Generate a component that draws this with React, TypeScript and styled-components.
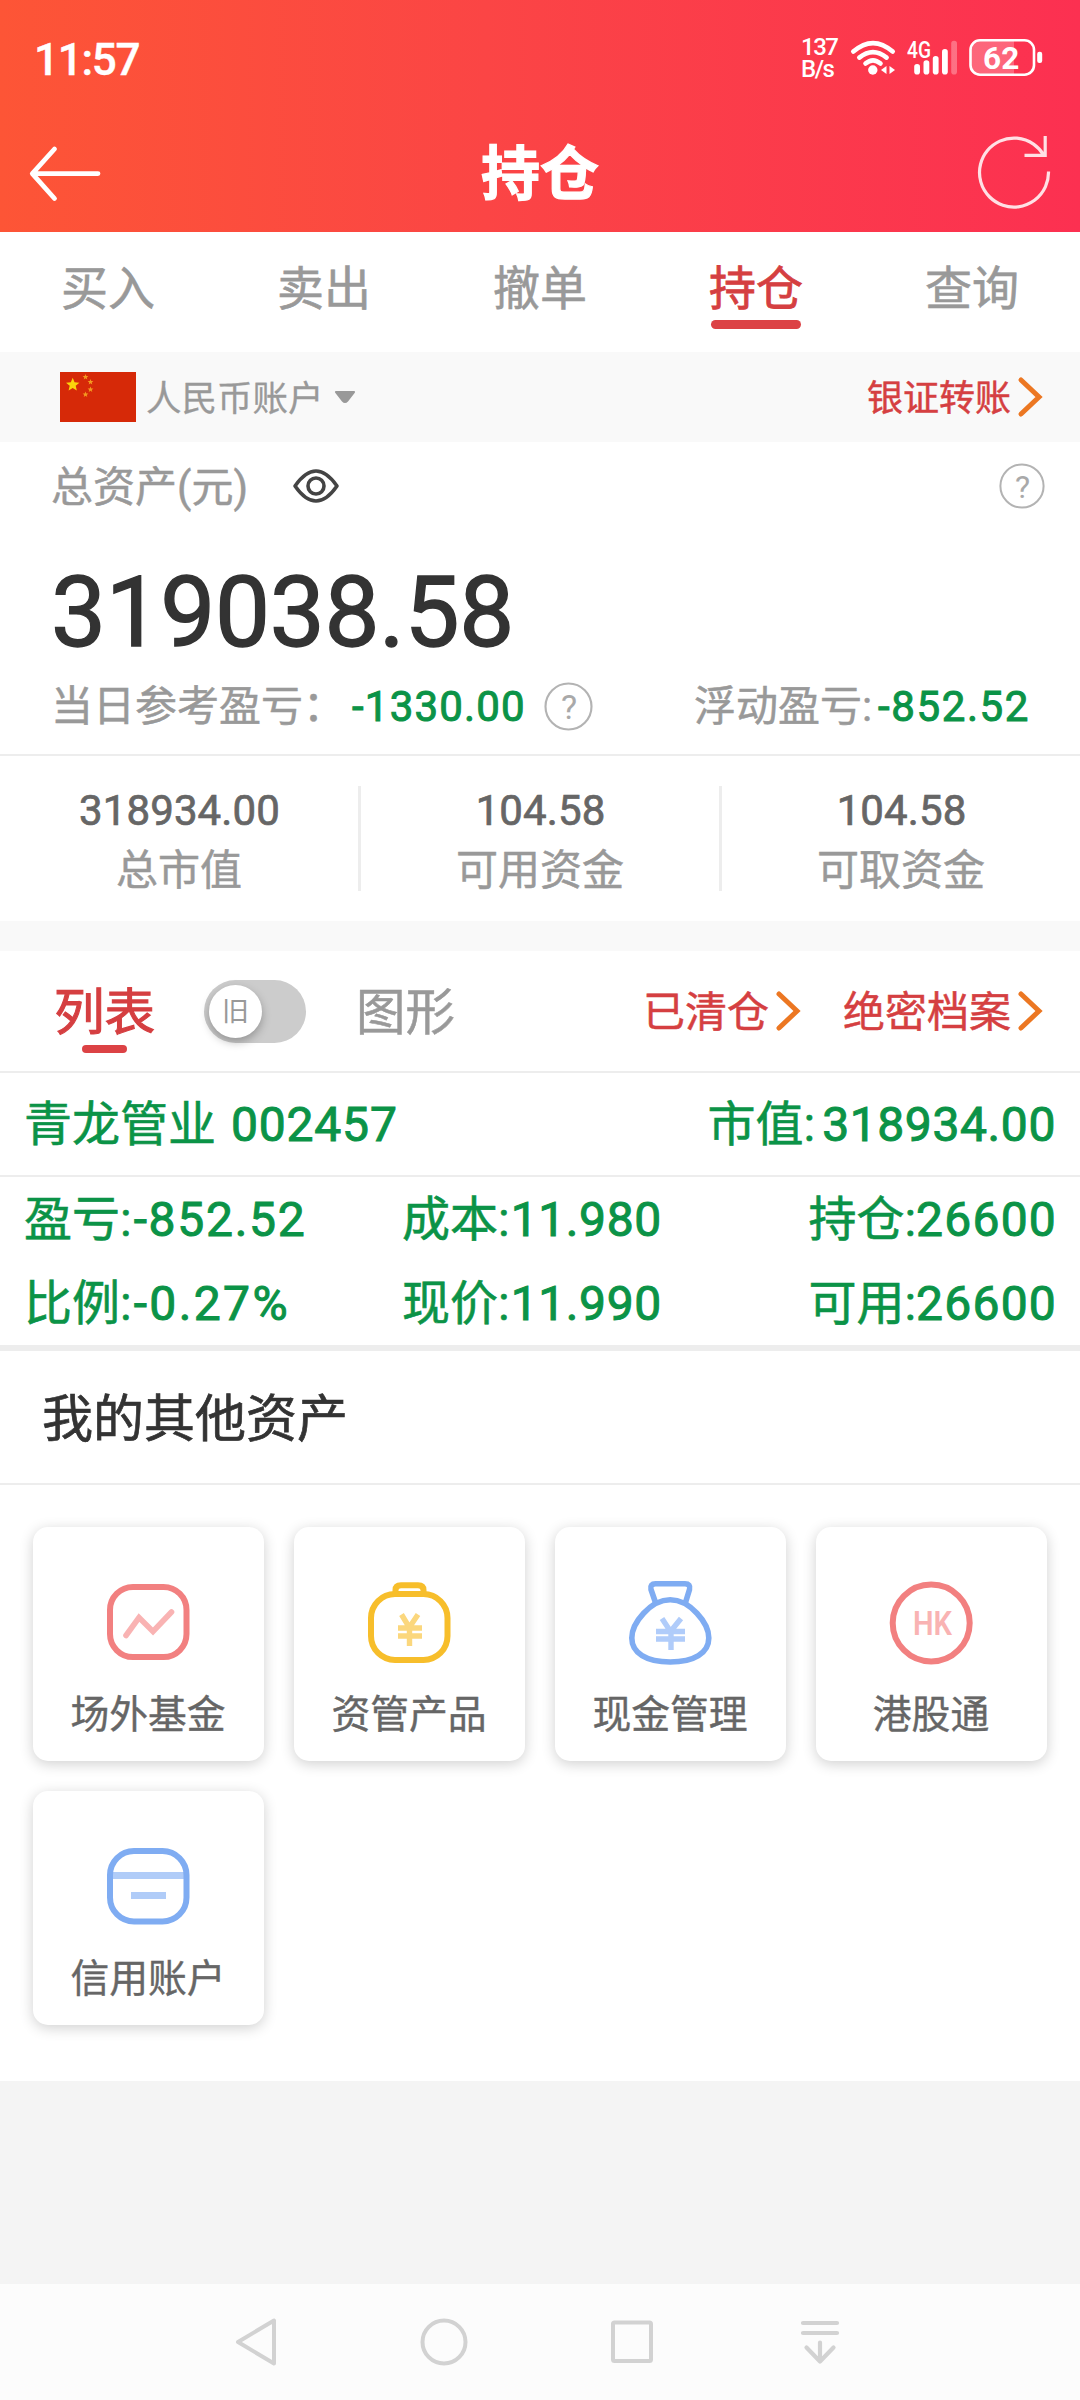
import React from "react";
import styled, { createGlobalStyle } from "styled-components";

const RED = "#d53f41";
const GREEN = "#0b9347";
const GREY = "#999999";
const LINE = "#ededed";

const GlobalStyle = createGlobalStyle`
  * { box-sizing: border-box; }
  html, body { margin: 0; padding: 0; background: #f4f4f4; }
  body {
    width: 1080px;
    font-family: Roboto, "Noto Sans CJK SC", sans-serif;
    font-weight: 400;
  }
  svg { display: block; flex: none; overflow: visible; }
`;

const Screen = styled.div`
  width: 1080px;
  height: 2400px;
  display: flex;
  flex-direction: column;
  background: #f4f4f4;
  overflow: hidden;
  white-space: nowrap;
`;

/* ---------- header ---------- */

const Header = styled.header`
  height: 232px;
  flex: none;
  background: linear-gradient(90deg, #fd5536 0%, #fb4545 45%, #fc3051 100%);
  color: #fff;
`;

const StatusBar = styled.div`
  height: 112px;
  display: flex;
  justify-content: space-between;
  padding: 0 37px 0 34px;
`;

const Clock = styled.div`
  font-size: 44px;
  line-height: 60px;
  padding-top: 30px;
  font-weight: 500;
  letter-spacing: -1.3px;
  -webkit-text-stroke: 0.4px currentColor;
`;

const StatusIcons = styled.div`
  display: flex;
  align-items: flex-start;
  padding-top: 36px;
`;

const NetSpeed = styled.div`
  width: 49px;
  font-size: 24px;
  line-height: 22px;
  font-weight: 500;
  text-align: left;
  letter-spacing: -1.5px;
`;

const TitleBar = styled.div`
  height: 120px;
  display: flex;
  align-items: center;
  justify-content: space-between;
  padding: 1px 26px 0;
`;

const Title = styled.h1`
  margin: 0;
  padding: 5px 2px 0 0;
  font-size: 59px;
  line-height: 60px;
  font-weight: 700;
  -webkit-text-stroke: 1.2px currentColor;
`;

/* ---------- tabs ---------- */

const Tabs = styled.nav`
  height: 120px;
  flex: none;
  display: grid;
  grid-template-columns: repeat(5, 1fr);
  background: #fff;
`;

const Tab = styled.div<{ $active?: boolean }>`
  display: flex;
  flex-direction: column;
  align-items: center;
  gap: 2px;
  padding-top: 28px;
  font-size: 47px;
  line-height: 58px;
  color: ${(p) => (p.$active ? RED : GREY)};
  -webkit-text-stroke: ${(p) => (p.$active ? "0.8px" : "0.6px")} currentColor;
  &::after {
    content: "";
    width: 90px;
    height: 9px;
    border-radius: 5px;
    background: ${(p) => (p.$active ? "#dc4245" : "transparent")};
  }
`;

/* ---------- account bar ---------- */

const AccountBar = styled.div`
  height: 90px;
  flex: none;
  display: flex;
  align-items: center;
  justify-content: space-between;
  padding: 0 37px 0 60px;
  background: #f9f9f9;
`;

const AccountPicker = styled.div`
  display: flex;
  align-items: center;
  color: ${GREY};
  font-size: 35.5px;
  line-height: 44px;
  -webkit-text-stroke: 0.3px currentColor;
  span { padding: 3px 10px 0 10px; }
`;

const ArrowLink = styled.div<{ $size: number }>`
  display: flex;
  align-items: center;
  gap: 6px;
  color: ${RED};
  font-size: ${(p) => p.$size}px;
  line-height: 50px;
  -webkit-text-stroke: 0.5px currentColor;
  span { padding-top: 3px; }
`;

/* ---------- assets ---------- */

const Assets = styled.section`
  height: 314px;
  flex: none;
  background: #fff;
  border-bottom: 2px solid ${LINE};
`;

const AssetsHead = styled.div`
  height: 88px;
  display: flex;
  align-items: center;
  justify-content: space-between;
  padding: 0 35px 0 51px;
`;

const AssetsLabel = styled.div`
  display: flex;
  align-items: center;
  gap: 45px;
  font-size: 42px;
  line-height: 50px;
  color: ${GREY};
  -webkit-text-stroke: 0.5px currentColor;
  span { padding-top: 3px; }
  svg { -webkit-text-stroke: 0; }
`;

const Total = styled.div`
  margin-top: 32px;
  padding-left: 51px;
  font-size: 98px;
  line-height: 101px;
  font-weight: 400;
  letter-spacing: -0.4px;
  color: #333;
  -webkit-text-stroke: 1.4px currentColor;
`;

const ProfitRow = styled.div`
  height: 87px;
  display: flex;
  align-items: center;
  justify-content: space-between;
  padding: 0 51px;
`;

const Profit = styled.div`
  display: flex;
  align-items: center;
  font-size: 42px;
  line-height: 50px;
  color: ${GREY};
  -webkit-text-stroke: 0.5px currentColor;
  svg { -webkit-text-stroke: 0; }
`;

const ProfitValue = styled.b<{ $left: number; $right: number; $track: number }>`
  font-weight: 400;
  color: ${GREEN};
  -webkit-text-stroke: 1px currentColor;
  letter-spacing: ${(p) => p.$track}px;
  margin-left: ${(p) => p.$left}px;
  margin-right: ${(p) => p.$right}px;
`;

const Stats = styled.section`
  height: 165px;
  flex: none;
  display: grid;
  grid-template-columns: 361px 361px 358px;
  padding: 30px 0;
  background: #fff;
`;

const Stat = styled.div`
  display: flex;
  flex-direction: column;
  align-items: center;
  border-right: 3px solid ${LINE};
  &:last-child { border-right: 0; }
`;

const StatValue = styled.div`
  font-size: 42px;
  line-height: 49px;
  font-weight: 400;
  letter-spacing: 0.1px;
  padding-left: 1px;
  color: #666;
  -webkit-text-stroke: 0.7px currentColor;
`;

const StatLabel = styled.div`
  margin-top: 16px;
  font-size: 42px;
  line-height: 40px;
  color: ${GREY};
  -webkit-text-stroke: 0.5px currentColor;
`;

const Gap = styled.div`
  height: 30px;
  flex: none;
  background: #f9f9f9;
`;

/* ---------- holdings ---------- */

const ListHead = styled.div`
  height: 122px;
  flex: none;
  display: flex;
  align-items: center;
  padding: 0 37px 0 54px;
  background: #fff;
  border-bottom: 2px solid ${LINE};
`;

const ViewMode = styled.div<{ $active?: boolean }>`
  display: flex;
  flex-direction: column;
  align-items: center;
  padding-top: 14px;
  font-size: ${(p) => (p.$active ? 50.5 : 49.5)}px;
  line-height: 60px;
  color: ${(p) => (p.$active ? RED : GREY)};
  -webkit-text-stroke: ${(p) => (p.$active ? "1.1px" : "0.5px")} currentColor;
  &::after {
    content: "";
    width: 45px;
    height: 8px;
    margin-top: 2px;
    border-radius: 4px;
    background: ${(p) => (p.$active ? "#dc4245" : "transparent")};
  }
`;

const Toggle = styled.div`
  width: 102px;
  height: 63px;
  flex: none;
  margin: 0 50px 0 49px;
  padding: 5px;
  border-radius: 32px;
  background: #ccc;
`;

const Knob = styled.div`
  width: 53px;
  height: 53px;
  border-radius: 50%;
  background: #fff;
  box-shadow: 0 4px 10px rgba(0, 0, 0, 0.28);
  font-size: 27px;
  line-height: 55px;
  text-align: center;
  color: ${GREY};
`;

const Links = styled.div`
  margin-left: auto;
  display: flex;
  gap: 42px;
`;

const StockHead = styled.div`
  height: 104px;
  flex: none;
  display: flex;
  align-items: center;
  justify-content: space-between;
  padding: 2px 24px 0 24px;
  font-size: 48px;
  line-height: 60px;
  color: ${GREEN};
  -webkit-text-stroke: 0.6px currentColor;
  background: #fff;
  border-bottom: 2px solid ${LINE};
`;

const Num = styled.span<{ $gap?: number; $track?: number }>`
  letter-spacing: ${(p) => p.$track ?? 0.8}px;
  margin-left: ${(p) => p.$gap ?? 0}px;
  -webkit-text-stroke: 1px currentColor;
`;

const StockGrid = styled.div`
  height: 174px;
  flex: none;
  display: grid;
  grid-template-columns: 378px 1fr auto;
  grid-template-rows: 84px 84px;
  padding: 1px 23px 0 24px;
  line-height: 84px;
  font-size: 48px;
  color: ${GREEN};
  -webkit-text-stroke: 0.6px currentColor;
  background: #fff;
  border-bottom: 6px solid ${LINE};
`;

/* ---------- other assets ---------- */

const OtherTitle = styled.h2`
  margin: 0;
  height: 134px;
  flex: none;
  padding: 4px 0 0 42px;
  font-size: 51px;
  line-height: 130px;
  font-weight: 400;
  color: #333;
  -webkit-text-stroke: 0.7px currentColor;
  background: #fff;
  border-bottom: 2px solid ${LINE};
`;

const Cards = styled.section`
  height: 596px;
  flex: none;
  display: grid;
  grid-template-columns: repeat(4, 231px);
  grid-auto-rows: 234px;
  gap: 30px;
  padding: 42px 33px 0;
  background: #fff;
`;

const Card = styled.div`
  display: flex;
  flex-direction: column;
  align-items: center;
  padding: 54px 1px 0 0;
  border-radius: 15px;
  background: #fff;
  box-shadow: 0 3px 14px rgba(0, 0, 0, 0.19);
`;

const CardLabel = styled.div`
  margin-top: 25px;
  font-size: 38.8px;
  line-height: 50px;
  color: #666;
  -webkit-text-stroke: 0.4px currentColor;
`;

const SystemNav = styled.footer`
  height: 116px;
  flex: none;
  margin-top: auto;
  display: flex;
  justify-content: center;
  align-items: center;
  gap: 140px;
  padding-right: 4px;
  background: #fcfcfc;
`;

/* ---------- icons ---------- */

const Wifi = () => (
  <svg width="46" height="40" viewBox="850 36 46 40" fill="none" stroke="#fff" strokeWidth="4.6" strokeLinecap="round">
    <path d="M853.3 51.6Q873 34.500 892.700 51.600M859.300 57.600Q873 46.500 886.600 57.600M865.500 63.600Q873 57 880.500 63.600" />
    <circle cx="872.8" cy="70" r="4.700" fill="#fff" stroke="none" />
    <path d="M881 70l5.500-4v8zM895 70l-5.500-4v8z" fill="#fff" stroke="none" />
  </svg>
);

const Signal = () => (
  <svg width="54" height="40" viewBox="905 36 54 40" fill="#fff">
    <text x="907" y="57.500" fontSize="23" fontWeight="500" textLength="24" lengthAdjust="spacingAndGlyphs">4G</text>
    <rect x="914.200" y="64" width="5.800" height="10.500" rx="2.800" />
    <rect x="923.500" y="60.300" width="5.800" height="14.200" rx="2.800" />
    <rect x="932.800" y="56" width="5.800" height="18.500" rx="2.800" />
    <rect x="942" y="49" width="5.800" height="25.500" rx="2.800" />
    <rect x="951.200" y="40.800" width="5.800" height="33.700" rx="2.800" opacity="0.3" />
  </svg>
);

const Battery = () => (
  <svg width="75" height="40" viewBox="968 36 75 40">
    <path d="M1014 39.500H979a8.500 8.500 0 0 0-8.500 8.500v18a8.500 8.500 0 0 0 8.500 8.500h35z" fill="#fff" opacity="0.25" />
    <rect x="970.500" y="40.300" width="63.500" height="34.400" rx="9.500" fill="none" stroke="#fff" strokeWidth="2.600" />
    <rect x="1037.200" y="51.800" width="5" height="11.200" rx="2.200" fill="#fff" />
    <text x="1001.200" y="68.800" textAnchor="middle" fontSize="31.500" fontWeight="700" fill="#fff">62</text>
  </svg>
);

const BackArrow = () => (
  <svg width="80" height="72" viewBox="26 136 80 72" fill="none" stroke="#fff" strokeWidth="4.800" strokeLinecap="round" strokeLinejoin="round">
    <path d="M98 172.600H33M54.500 148L32.300 172.600L54.500 197.500" />
  </svg>
);

const Refresh = () => (
  <svg width="78" height="74" viewBox="976 136 78 74" fill="none" stroke="#fff" strokeWidth="3.200">
    <path d="M1048.500 171.500A34.500 34.500 0 1 1 1044 155.500M1045.200 136V155.300H1024.500" opacity="0.850" />
  </svg>
);

const starPoints = (cx: number, cy: number, r: number) =>
  Array.from({ length: 10 }, (_, i) => {
    const a = (Math.PI * i) / 5 - Math.PI / 2;
    const k = i % 2 ? r * 0.45 : r;
    return `${(cx + k * Math.cos(a)).toFixed(2)},${(cy + k * Math.sin(a)).toFixed(2)}`;
  }).join(" ");

const Flag = () => (
  <svg width="76" height="50" viewBox="0 0 76 50">
    <rect width="76" height="50" fill="#d62908" />
    <polygon points={starPoints(12.7, 12.8, 7)} fill="#fbd30c" />
    {[[25.500, 5], [30.500, 10], [30.500, 17.500], [25.500, 22.500]].map(([x, y]) => (
      <polygon key={`${x}-${y}`} points={starPoints(x, y, 3)} fill="#f39a20" />
    ))}
  </svg>
);

const Caret = () => (
  <svg width="22" height="14" viewBox="0 0 22 14">
    <path d="M2 1H20a1 1 0 0 1 .8 1.700L14 11.500Q11 14.500 8 11.500L1.200 2.700A1 1 0 0 1 2 1z" fill="#999" />
  </svg>
);

const Chevron = () => (
  <svg width="26" height="40" viewBox="0 0 26 40" fill="none" stroke="#ec7722" strokeWidth="5" strokeLinecap="round">
    <path d="M4 3L22 20L4 37" />
  </svg>
);

const Eye = () => (
  <svg width="46" height="36" viewBox="0 0 46 36" fill="none" stroke="#444" strokeWidth="3.600">
    <path d="M2 18C10 6.500 17 3 23 3S36 6.500 44 18C36 29.500 29 33 23 33S10 29.500 2 18z" strokeLinejoin="round" />
    <circle cx="23" cy="18" r="8" />
  </svg>
);

const Help = ({ size }: { size: number }) => (
  <svg width={size} height={size} viewBox="0 0 46 46">
    <circle cx="23" cy="23" r="21.600" fill="none" stroke="#b3b3b3" strokeWidth="2" />
    <text x="23.500" y="34.500" textAnchor="middle" fontSize="32" fontWeight="400" fill="#a9a9a9">?</text>
  </svg>
);

const FundIcon = () => (
  <svg width="84" height="84" viewBox="0 0 84 84" fill="none" strokeWidth="6" strokeLinecap="round" strokeLinejoin="round">
    <rect x="4" y="6" width="76.500" height="70" rx="23" stroke="#f28080" />
    <path d="M20 54.500L33 36.500L47 50.500L65.500 31" stroke="#f9b3b3" strokeWidth="5.600" strokeLinejoin="miter" />
  </svg>
);

const PurseIcon = () => (
  <svg width="84" height="84" viewBox="0 0 84 84" fill="none" strokeWidth="6" stroke="#f7be2b">
    <rect x="4" y="13" width="76.500" height="66" rx="24" />
    <path d="M28.500 13V9Q28.500 4.200 34 4.200H51Q56.500 4.200 56.500 9V13" />
    <path d="M34.500 33.500L42.300 46.500L51 33.500M31 47H55M31 55H55M42.500 46V65" stroke="#fbd77d" strokeWidth="5.400" />
  </svg>
);

const BagIcon = () => (
  <svg width="84" height="84" viewBox="0 0 84 84" fill="none" strokeWidth="5.600" stroke="#7facf2">
    <path d="M42.200 18.800C62 18.800 80.800 42 80.800 57C80.800 72 66 81 42.200 81S3.800 72 3.800 57C3.800 42 22.500 18.800 42.200 18.800z" />
    <path d="M27.500 21.500L23 8.500Q21.800 2.800 27.500 2.800H57Q62.800 2.800 61.500 8.500L57.500 21.500" />
    <path d="M34 37.500L42.500 50.500L53 37.500M28 50.500H57M28 58H57M43 48V69" stroke="#b0ccfa" strokeWidth="5.400" />
  </svg>
);

const HkIcon = () => (
  <svg width="84" height="84" viewBox="0 0 84 84">
    <circle cx="42.200" cy="42" r="38.500" fill="none" stroke="#f28080" strokeWidth="6" />
    <text x="43.500" y="54" textAnchor="middle" fontSize="33" fontWeight="600" textLength="39" lengthAdjust="spacingAndGlyphs" fill="#f9b3b3">HK</text>
  </svg>
);

const CreditIcon = () => (
  <svg width="84" height="84" viewBox="0 0 84 84" fill="none" strokeWidth="6">
    <path d="M6 30.500H78M25 50.500H60" stroke="#b0ccf8" strokeWidth="7" />
    <rect x="4" y="6" width="76.500" height="70.500" rx="24" stroke="#7facf2" />
  </svg>
);

const tabs = ["买入", "卖出", "撤单", "持仓", "查询"];

const stats = [
  ["318934.00", "总市值"],
  ["104.58", "可用资金"],
  ["104.58", "可取资金"],
];

const fields = [
  { name: "盈亏:", value: "-852.52", track: 1.7, gap: 2 },
  { name: "成本:", value: "11.980", track: 0.6, gap: 1 },
  { name: "持仓:", value: "26600", track: 1.2, gap: 0 },
  { name: "比例:", value: "-0.27%", track: 2.4, gap: 2 },
  { name: "现价:", value: "11.990", track: 0.6, gap: 1 },
  { name: "可用:", value: "26600", track: 1.2, gap: 0 },
];

const cards = [
  { label: "场外基金", Icon: FundIcon },
  { label: "资管产品", Icon: PurseIcon },
  { label: "现金管理", Icon: BagIcon },
  { label: "港股通", Icon: HkIcon },
  { label: "信用账户", Icon: CreditIcon },
];

export default function App() {
  return (
    <Screen>
      <GlobalStyle />
      <Header>
        <StatusBar>
          <Clock>11:57</Clock>
          <StatusIcons>
            <NetSpeed>
              <div>137</div>
              <div>B/s</div>
            </NetSpeed>
            <Wifi />
            <svg width="9" height="1" />
            <Signal />
            <svg width="9" height="1" />
            <Battery />
          </StatusIcons>
        </StatusBar>
        <TitleBar>
          <BackArrow />
          <Title>持仓</Title>
          <Refresh />
        </TitleBar>
      </Header>

      <Tabs>
        {tabs.map((t) => (
          <Tab key={t} $active={t === "持仓"}>{t}</Tab>
        ))}
      </Tabs>

      <AccountBar>
        <AccountPicker>
          <Flag />
          <span>人民币账户</span>
          <Caret />
        </AccountPicker>
        <ArrowLink $size={36}>
          <span>银证转账</span>
          <Chevron />
        </ArrowLink>
      </AccountBar>

      <Assets>
        <AssetsHead>
          <AssetsLabel>
            <span>总资产(元)</span>
            <Eye />
          </AssetsLabel>
          <Help size={46} />
        </AssetsHead>
        <Total>319038.58</Total>
        <ProfitRow>
          <Profit>
            当日参考盈亏：
            <ProfitValue $left={7} $right={18} $track={1.2}>-1330.00</ProfitValue>
            <Help size={49} />
          </Profit>
          <Profit>
            浮动盈亏:
            <ProfitValue $left={6} $right={-1} $track={1.6}>-852.52</ProfitValue>
          </Profit>
        </ProfitRow>
      </Assets>

      <Stats>
        {stats.map(([value, label]) => (
          <Stat key={label}>
            <StatValue>{value}</StatValue>
            <StatLabel>{label}</StatLabel>
          </Stat>
        ))}
      </Stats>

      <Gap />

      <ListHead>
        <ViewMode $active>列表</ViewMode>
        <Toggle><Knob>旧</Knob></Toggle>
        <ViewMode>图形</ViewMode>
        <Links>
          <ArrowLink $size={42}><span>已清仓</span><Chevron /></ArrowLink>
          <ArrowLink $size={42}><span>绝密档案</span><Chevron /></ArrowLink>
        </Links>
      </ListHead>

      <StockHead>
        <div>青龙管业<Num $gap={15}>002457</Num></div>
        <div>市值:<Num $gap={7} $track={0.6}>318934.00</Num></div>
      </StockHead>
      <StockGrid>
        {fields.map(({ name, value, track, gap }) => (
          <div key={name}>{name}<Num $track={track} $gap={gap}>{value}</Num></div>
        ))}
      </StockGrid>

      <OtherTitle>我的其他资产</OtherTitle>
      <Cards>
        {cards.map(({ label, Icon }) => (
          <Card key={label}>
            <Icon />
            <CardLabel>{label}</CardLabel>
          </Card>
        ))}
      </Cards>

      <SystemNav>
        <svg width="48" height="50" viewBox="0 0 48 50" fill="none" stroke="#d2d2d2" strokeWidth="4" strokeLinejoin="round">
          <path d="M42 3.500V46.500L6 25z" />
        </svg>
        <svg width="48" height="50" viewBox="0 0 48 50" fill="none" stroke="#d2d2d2" strokeWidth="4">
          <circle cx="24" cy="25" r="21.500" />
        </svg>
        <svg width="48" height="50" viewBox="0 0 48 50" fill="none" stroke="#d2d2d2" strokeWidth="4">
          <rect x="5" y="5.500" width="38" height="38.500" rx="1.500" />
        </svg>
        <svg width="48" height="50" viewBox="0 0 48 50" fill="none" stroke="#d2d2d2" strokeWidth="4.200" strokeLinecap="round" strokeLinejoin="round">
          <path d="M7 6H41M7 16H41M24 25.500V44M10.500 30.500L24 44.500L37.500 30.500" />
        </svg>
      </SystemNav>
    </Screen>
  );
}
